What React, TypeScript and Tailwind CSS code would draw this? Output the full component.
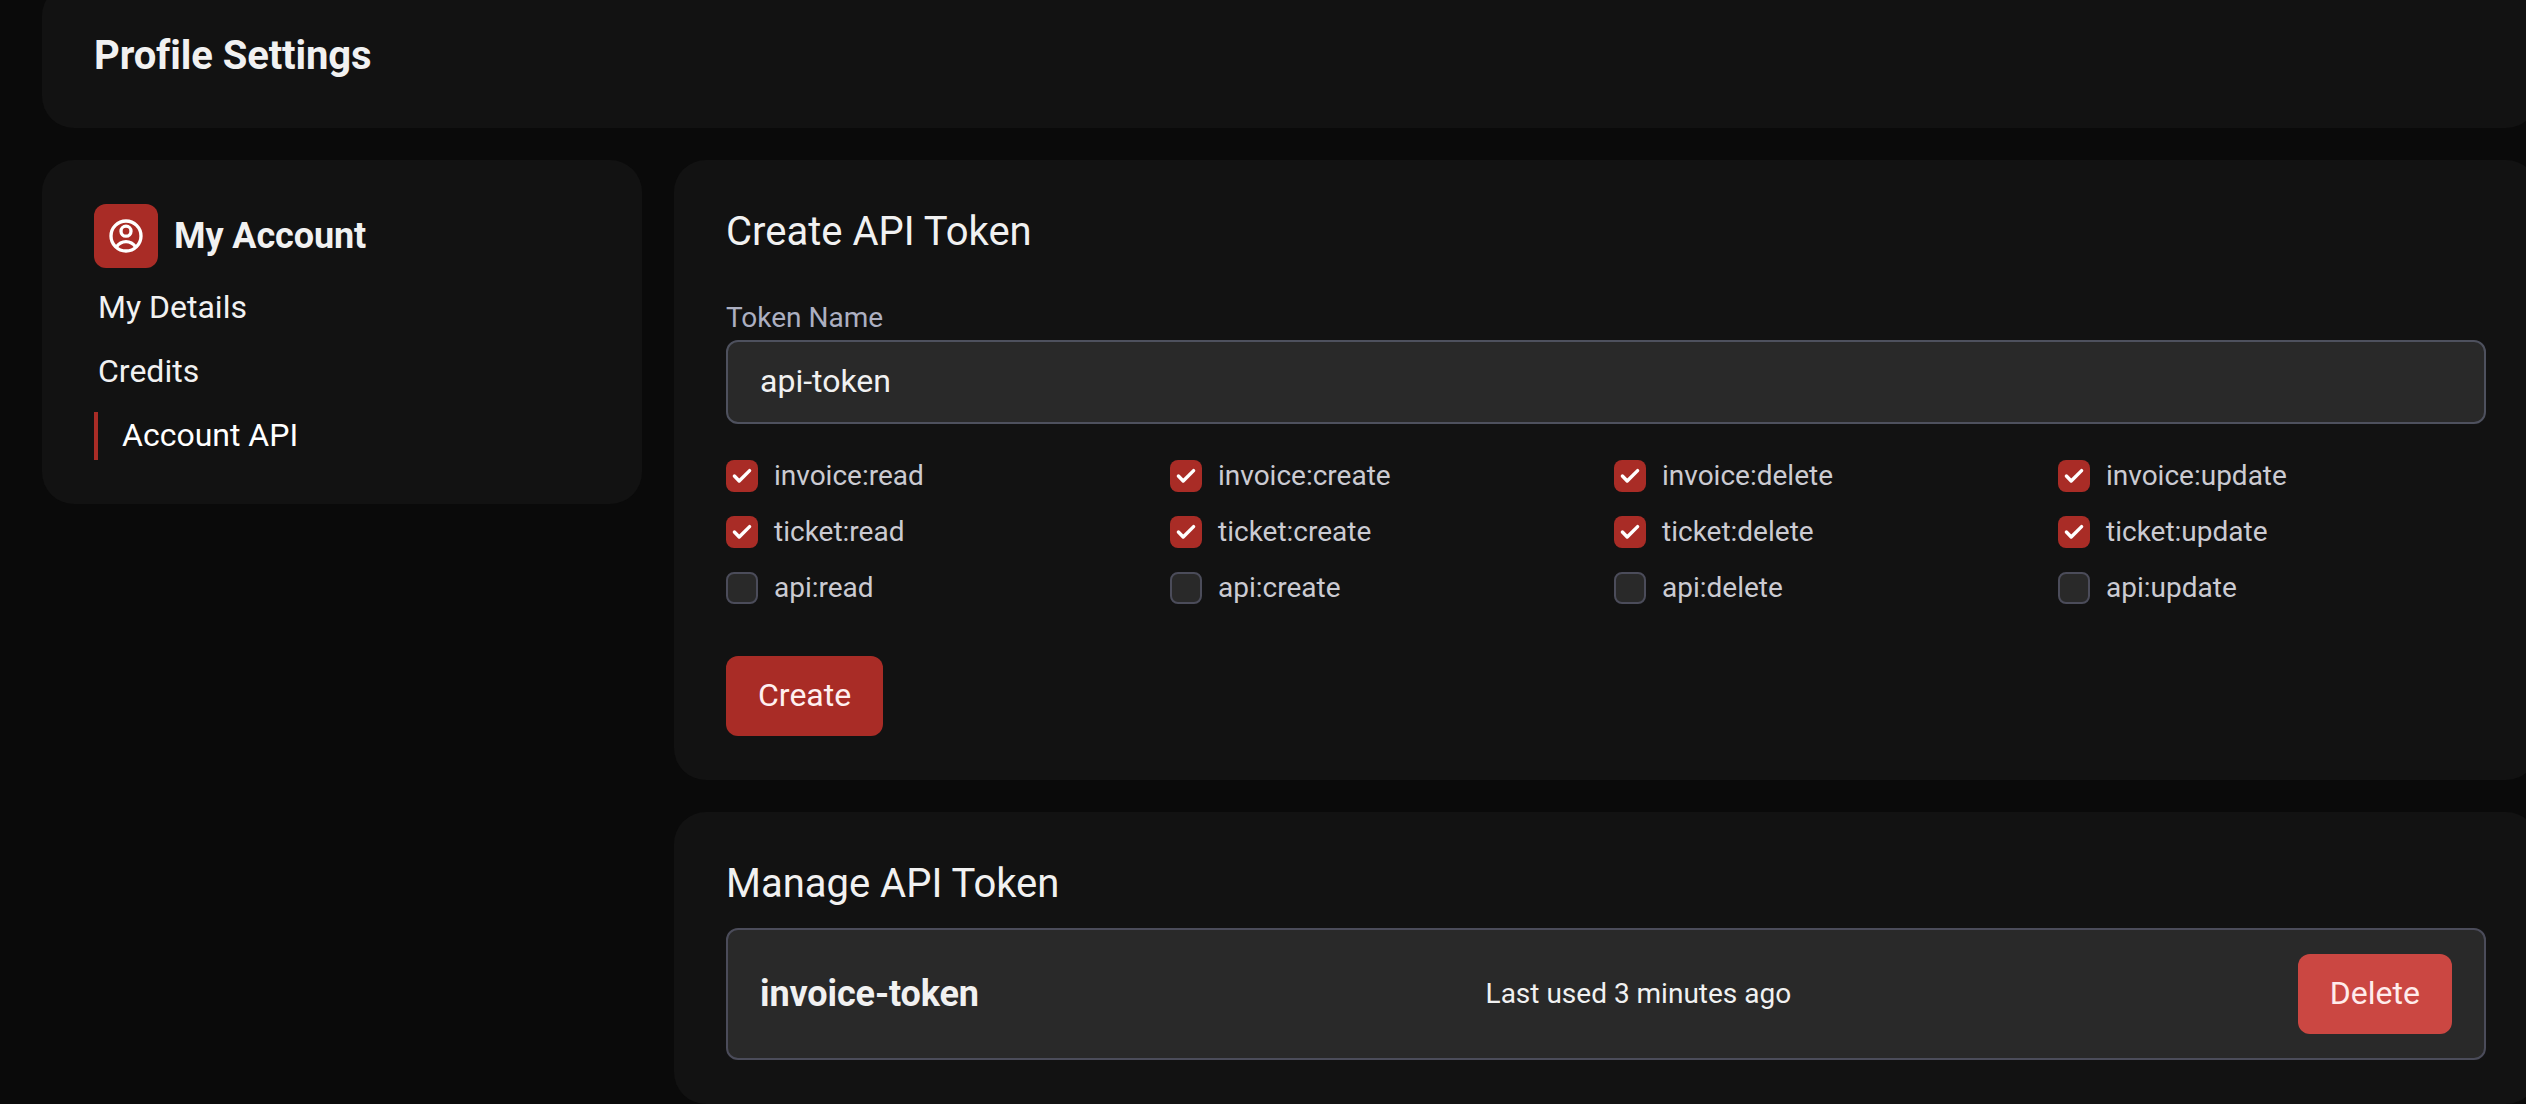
import type { ReactNode } from "react";

const ACTIONS = ["read", "create", "delete", "update"];
const RESOURCES = [
  { name: "invoice", checked: true },
  { name: "ticket", checked: true },
  { name: "api", checked: false },
];

function AccountIcon() {
  return (
    <svg viewBox="0 0 24 24" className="size-10" fill="none" stroke="currentColor" strokeWidth="2">
      <circle cx="12" cy="12" r="9" />
      <circle cx="12" cy="9.1" r="3" />
      <path d="M6.2 18.6C7.6 16.6 9.6 15.4 12 15.4s4.4 1.2 5.8 3.2" />
    </svg>
  );
}

function Checkbox({ label, checked }: { label: string; checked: boolean }) {
  return (
    <label className="flex h-10 items-center gap-4 text-[28px] leading-10 text-[#cbcbd2]">
      {checked ? (
        <span className="size-8 rounded-lg bg-[#a92c26] text-white">
          <svg
            viewBox="0 0 16 16"
            className="size-8"
            fill="none"
            stroke="currentColor"
            strokeWidth="1.7"
            strokeLinecap="round"
            strokeLinejoin="round"
          >
            <path d="M4.2 8L6.6 10.5L11.8 5.3" />
          </svg>
        </span>
      ) : (
        <span className="size-8 rounded-lg border-2 border-[#4b4c5a] bg-[#292929]" />
      )}
      <span>{label}</span>
    </label>
  );
}

function Card({ children, className = "" }: { children: ReactNode; className?: string }) {
  return <section className={`rounded-[32px] bg-[#121212] px-[52px] py-11 ${className}`}>{children}</section>;
}

export default function App() {
  return (
    <div className="h-[1104px] w-full overflow-hidden bg-[#0a0a0a] font-[Roboto,sans-serif] text-[#f1f1f1]">
      <div className="-mt-4 ml-[42px] flex w-[2496px] flex-col gap-8">
        <Card>
          <h1 className="text-[40px] leading-[56px] font-bold tracking-[-0.1px]">Profile Settings</h1>
        </Card>
        <div className="flex items-start gap-8">
          <Card className="w-[600px] shrink-0">
            <div className="flex items-center gap-4">
              <span className="flex size-16 items-center justify-center rounded-xl bg-[#a92c26] text-white">
                <AccountIcon />
              </span>
              <h2 className="text-[36px] leading-[56px] font-bold tracking-[-0.1px]">My Account</h2>
            </div>
            <nav className="mt-4 flex flex-col gap-4 text-[32px] leading-[46px]">
              <a className="pb-0.5 pl-1">My Details</a>
              <a className="pb-0.5 pl-1">Credits</a>
              <a className="border-l-4 border-[#a92c26] pb-0.5 pl-6 text-white">Account API</a>
            </nav>
          </Card>
          <main className="flex min-w-0 flex-1 flex-col gap-8">
            <Card>
              <h2 className="text-[40px] leading-[56px]">Create API Token</h2>
              <div className="mt-[38px] text-[28px] leading-10 text-[#acafc1]">Token Name</div>
              <div className="mt-0.5 flex h-[84px] items-center rounded-xl border-2 border-[#4e515e] bg-[#292929] px-8 pb-0.5 text-[32px]">
                api-token
              </div>
              <div className="mt-8 grid grid-cols-4 gap-4">
                {RESOURCES.map((resource) =>
                  ACTIONS.map((action) => (
                    <Checkbox
                      key={`${resource.name}:${action}`}
                      label={`${resource.name}:${action}`}
                      checked={resource.checked}
                    />
                  )),
                )}
              </div>
              <button className="mt-12 block h-20 rounded-xl bg-[#a92c26] px-8 pb-0.5 text-[32px] text-[#fff0f0]">
                Create
              </button>
            </Card>
            <Card>
              <h2 className="text-[40px] leading-[56px]">Manage API Token</h2>
              <div className="mt-4 flex h-[132px] items-center justify-between rounded-xl border-2 border-[#4b4c5a] bg-[#292929] px-8">
                <span className="text-[36px] font-bold tracking-[-0.12px]">invoice-token</span>
                <span className="text-[28px]">Last used 3 minutes ago</span>
                <button className="h-20 rounded-xl bg-[#cb4742] px-8 pb-0.5 text-[32px] text-[#ffecec]">Delete</button>
              </div>
            </Card>
          </main>
        </div>
      </div>
    </div>
  );
}
